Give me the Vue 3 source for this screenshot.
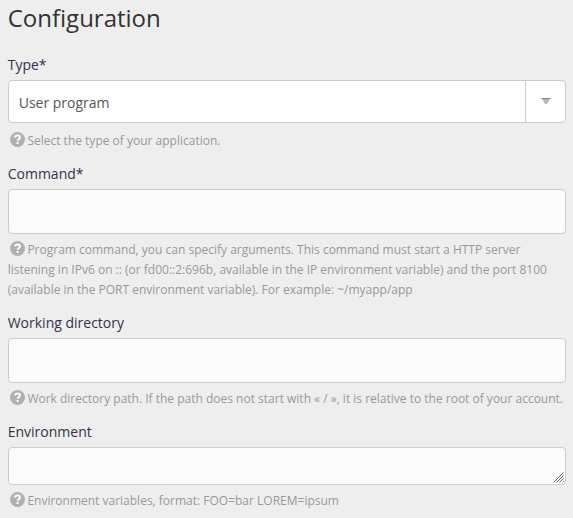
<script setup>
const fields = [
  { id: 'type', label: 'Type*', kind: 'select', help: ['Select the type of your application.'] },
  { id: 'command', label: 'Command*', kind: 'input', help: ['Program command, you can specify arguments. This command must start a HTTP server', 'listening in IPv6 on :: (or fd00::2:696b, available in the IP environment variable) and the port 8100', '(available in the PORT environment variable). For example: ~/myapp/app'] },
  { id: 'directory', label: 'Working directory', kind: 'input', help: ['Work directory path. If the path does not start with « / », it is relative to the root of your account.'] },
  { id: 'environment', label: 'Environment', kind: 'area', help: ['Environment variables, format: FOO=bar LOREM=ipsum'] },
]
</script>

<template>
  <main class="page">
    <h1>Configuration</h1>
    <section v-for="f in fields" :key="f.id" class="field">
      <label>{{ f.label }}</label>
      <div v-if="f.kind === 'select'" class="select">
        <span class="value">User program</span>
        <span class="toggle"><svg width="10" height="6" viewBox="0 0 10 6"><path d="M0.5 0h9L6 6H4z" fill="#b9b9bc" /><path d="M0.5 0h9v1h-9z" fill="#828286" /></svg></span>
      </div>
      <div v-else class="control" :class="f.kind">
        <svg v-if="f.kind === 'area'" class="grip" width="11" height="11" viewBox="0 0 11 11"><path d="M0.5 10.5l10-10M3.5 10.5l7-7M6.5 10.5l4-4M9.5 10.5l1-1" stroke="#666" fill="none" /></svg>
      </div>
      <p :class="{ first: f.kind === 'select' }">
        <svg class="icon" width="15" height="15" viewBox="0 0 15 15"><circle cx="7.5" cy="7.5" r="7.5" fill="#b0b0b0" /><path d="M4.9 5.4C5.2 4 6.2 3.6 7.5 3.6c1.5 0 2.5.7 2.5 1.9 0 1.6-2.4 1.6-2.4 3.3M7.6 10v2" stroke="#fff" stroke-width="2" fill="none" /></svg><template v-for="(line, i) in f.help" :key="i"><br v-if="i">{{ line }}</template>
      </p>
    </section>
  </main>
</template>

<style>
body { background: #eee; }
</style>
<style scoped>
.page { box-sizing: border-box; height: 518px; overflow: hidden; padding: 0 7px 0 7.7px; font-family: "Open Sans", sans-serif; color: #333; }
h1 { margin: 0; height: 55px; font-size: 24px; line-height: 35px; font-weight: 400; }
label { display: block; height: 25px; line-height: 20px; font-size: 14px; color: #33334d; }
.select, .control { box-sizing: border-box; border: 1px solid #ccc; border-radius: 4px; background: #fbfbfb; }
.select { display: flex; height: 43px; background: #fff; }
.value { flex: 1; padding-left: 10px; font-size: 14px; line-height: 43px; color: #555; }
.toggle { width: 39px; border-left: 1px solid #ccc; display: flex; align-items: center; justify-content: center; }
.toggle svg { margin: 0 0 2px 1px; }
.input { height: 45px; }
.area { height: 38px; display: flex; align-items: flex-end; justify-content: flex-end; padding: 0 1px 1px 0; }
p { margin: 0; padding: 6px 0 13px; font-size: 12px; line-height: 20px; color: #999; white-space: nowrap; }
p.first { padding-top: 8px; }
.icon { margin: 0 2.4px 0 2.3px; vertical-align: -2px; }
</style>
